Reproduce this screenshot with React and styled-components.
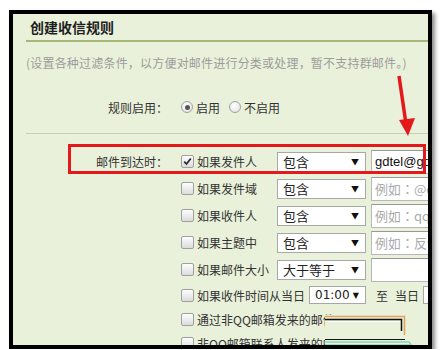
import React from 'react'
import styled, { createGlobalStyle } from 'styled-components'

const GlobalStyle = createGlobalStyle`
  html, body {
    margin: 0;
    padding: 0;
    background: #ffffff;
  }
  body {
    font-family: "Noto Sans CJK SC", "Noto Sans", sans-serif;
  }
`

const Frame = styled.div`
  position: relative;
  box-sizing: border-box;
  margin: 10px 0 0 9px;
  width: 423px;
  height: 339px;
  border: 4px solid #000;
  box-shadow: 3px 3px 4px rgba(0, 0, 0, 0.45);
  background: #e9f1da;
  overflow: hidden;
`

const Content = styled.div`
  padding-left: 13px;
  width: 520px;
`

const Title = styled.h2`
  margin: 0;
  height: 26px;
  line-height: 26px;
  padding-left: 4px;
  font-size: 14px;
  font-weight: bold;
  color: #1e1e1e;
  border-bottom: 2px solid #a7b77a;
`

const Hint = styled.p`
  margin: 11px 0 0;
  line-height: 20px;
  font-size: 12px;
  letter-spacing: 0.2px;
  color: #9c9c9c;
  white-space: nowrap;
`

const Row = styled.div`
  display: flex;
  align-items: center;
  height: ${p => p.$h || 27}px;
  margin-top: ${p => p.$mt || 0}px;
`

const Label = styled.div`
  width: 142px;
  margin-right: 13px;
  text-align: right;
  font-size: 12px;
  color: #333;
  flex-shrink: 0;
`

const Separator = styled.div`
  margin-top: 16px;
  border-top: 1px solid #c8d2b3;
`

const Conditions = styled.div`
  padding-top: 14px;
`

const Radio = styled.span`
  box-sizing: border-box;
  width: 12px;
  height: 12px;
  border-radius: 50%;
  border: 1px solid #a2a2a2;
  background: radial-gradient(circle at 40% 35%, #ffffff 0%, #dedede 100%);
  display: inline-flex;
  align-items: center;
  justify-content: center;
  margin-right: 3px;
  &::after {
    content: '';
    width: 5px;
    height: 5px;
    border-radius: 50%;
    background: ${p => (p.$on ? '#555' : 'transparent')};
  }
`

const Choice = styled.span`
  display: inline-flex;
  align-items: center;
  font-size: 12px;
  color: #333;
  margin-right: 9px;
`

const Box = styled.span`
  box-sizing: border-box;
  width: 13px;
  height: 13px;
  border: 1px solid #a0a0a0;
  border-radius: 2px;
  background: linear-gradient(#fdfdfd, #dcdcdc);
  display: inline-flex;
  align-items: center;
  justify-content: center;
  margin-right: 3px;
  flex-shrink: 0;
`

const CondText = styled.span`
  min-width: 76px;
  margin-right: 4px;
  font-size: 12px;
  color: #333;
  white-space: nowrap;
`

const Select = styled.div`
  box-sizing: border-box;
  display: inline-flex;
  align-items: center;
  justify-content: space-between;
  width: ${p => p.$w || 89}px;
  height: ${p => p.$h || 20}px;
  padding: 0 6px 0 5px;
  background: #fff;
  border: 1px solid #a8a8a8;
  font-size: ${p => (p.$mono ? 12 : 13)}px;
  font-family: ${p => (p.$mono ? '"DejaVu Sans", sans-serif' : 'inherit')};
  color: #222;
  flex-shrink: 0;
`

const Arrow = styled.span`
  font-size: 8px;
  color: #111;
`

const Field = styled.div`
  box-sizing: border-box;
  display: inline-flex;
  align-items: center;
  width: 170px;
  height: 24px;
  margin-left: 5px;
  padding-left: 3px;
  background: #fff;
  border: 1px solid #b8b8b8;
  border-top-color: #9a9a9a;
  font-size: 13px;
  color: ${p => (p.$ph ? '#acacac' : '#111')};
  font-family: ${p => (p.$ph ? '"Noto Sans CJK TC", sans-serif' : '"Liberation Sans", sans-serif')};
  white-space: nowrap;
  flex-shrink: 0;
`

const Plain = styled.span`
  font-size: 12px;
  color: #333;
  margin-left: ${p => p.$ml || 0}px;
  margin-right: ${p => p.$mr || 0}px;
  white-space: nowrap;
`

const RedBox = styled.div`
  position: absolute;
  left: 55px;
  top: 130px;
  width: 358px;
  height: 30px;
  box-sizing: border-box;
  border: 3px solid #e3191c;
`

const Overlay = styled.svg`
  position: absolute;
  left: ${p => p.$x}px;
  top: ${p => p.$y}px;
`

const Check = () => (
  <svg width="9" height="9" viewBox="0 0 9 9">
    <path d="M1.2 4.6 L3.5 7 L7.8 1.5" fill="none" stroke="#2a2a2a" strokeWidth="1.8" />
  </svg>
)

const Cond = ({ label, checked, text, children }) => (
  <Row>
    <Label>{label}</Label>
    <Box>{checked && <Check />}</Box>
    <CondText>{text}</CondText>
    {children}
  </Row>
)

const App = () => {
  return (
    <>
      <GlobalStyle />
      <Frame>
        <Content>
          <Title>创建收信规则</Title>
          <Hint>(设置各种过滤条件，以方便对邮件进行分类或处理，暂不支持群邮件。)</Hint>
          <Row $h={20} $mt={24}>
            <Label>规则启用：</Label>
            <Choice><Radio $on />启用</Choice>
            <Choice><Radio />不启用</Choice>
          </Row>
          <Separator />
          <Conditions>
            <Cond label="邮件到达时：" checked text="如果发件人">
              <Select><span>包含</span><Arrow>▼</Arrow></Select>
              <Field>gdtel@gdtel.com</Field>
            </Cond>
            <Cond label="" text="如果发件域">
              <Select><span>包含</span><Arrow>▼</Arrow></Select>
              <Field $ph>例如：@qq.com</Field>
            </Cond>
            <Cond label="" text="如果收件人">
              <Select><span>包含</span><Arrow>▼</Arrow></Select>
              <Field $ph>例如：qqmail@qq.com</Field>
            </Cond>
            <Cond label="" text="如果主题中">
              <Select><span>包含</span><Arrow>▼</Arrow></Select>
              <Field $ph>例如：反馈</Field>
            </Cond>
            <Cond label="" text="如果邮件大小">
              <Select><span>大于等于</span><Arrow>▼</Arrow></Select>
              <Field />
            </Cond>
            <Row $h={24}>
              <Label />
              <Box />
              <CondText>如果收件时间从当日</CondText>
              <Select $w={57} $h={18} $mono><span>01:00</span><Arrow>▼</Arrow></Select>
              <Plain $ml={10} $mr={7}>至</Plain>
              <Plain $mr={4}>当日</Plain>
              <Select $w={57} $h={18} $mono><span>01:00</span><Arrow>▼</Arrow></Select>
            </Row>
            <Row $h={24}>
              <Label />
              <Box />
              <CondText>通过非QQ邮箱发来的邮件</CondText>
            </Row>
            <Row $h={24}>
              <Label />
              <Box />
              <CondText>非QQ邮箱联系人发来的邮件</CondText>
            </Row>
          </Conditions>
        </Content>

        <RedBox />

        <Overlay $x={380} $y={60} width="30" height="66" viewBox="0 0 30 66">
          <path d="M6 2 L13 50" stroke="#e3191c" strokeWidth="3.5" fill="none" />
          <path d="M6 46 L22 44 L15 62 Z" fill="#e3191c" />
        </Overlay>

        <Overlay $x={312} $y={301} width="100" height="32" viewBox="0 0 100 32">
          <rect x="0" y="0" width="92" height="32" fill="#e9f1da" />
          <path d="M0 1.5 H79.5 V20" stroke="#e2a25a" strokeWidth="1.5" fill="none" />
          <path d="M0 4.5 H76.5 V16" stroke="#111" strokeWidth="1.5" fill="none" />
          <path d="M0 6.5 H75" stroke="#ffffff" strokeWidth="1" fill="none" />
          <path d="M0 24.5 H80" stroke="#111" strokeWidth="1.2" fill="none" />
          <path d="M0 27 H84 L88 32" stroke="#7fd9bd" strokeWidth="1.5" fill="none" />
          <path d="M0 30 H86" stroke="#7fd9bd" strokeWidth="1.5" fill="none" />
        </Overlay>
      </Frame>
    </>
  )
}

export default App
